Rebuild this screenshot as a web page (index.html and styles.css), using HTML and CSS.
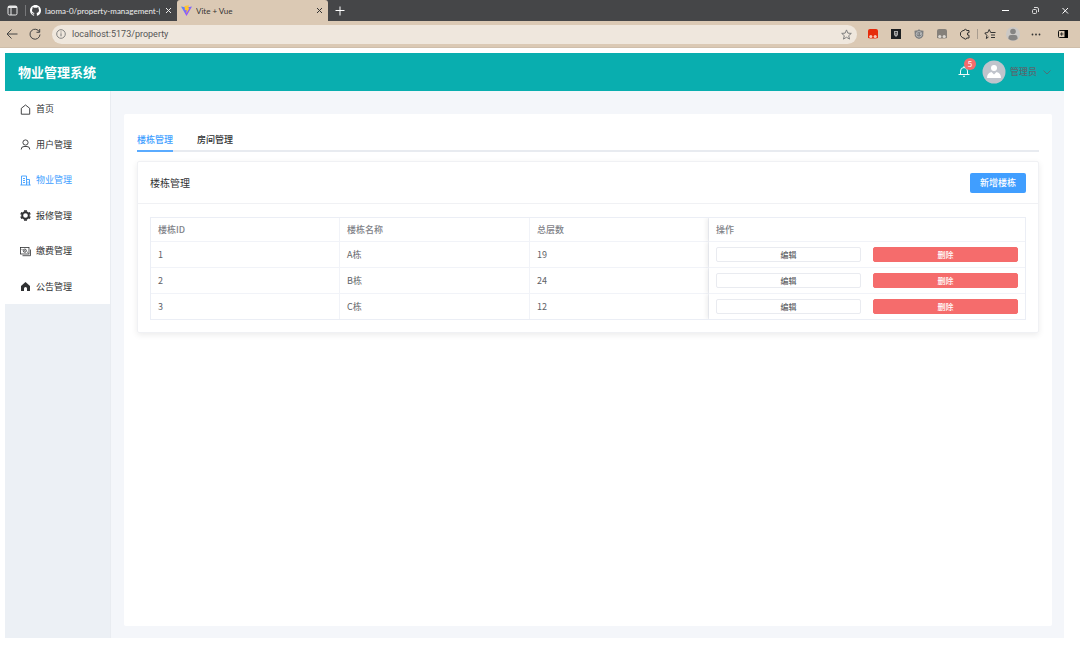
FILE: index.html
```html
<!DOCTYPE html>
<html lang="zh-CN">
<head>
<meta charset="utf-8">
<title>Vite + Vue</title>
<link rel="stylesheet" href="styles.css">
</head>
<body>
<div class="window">
  <div class="tabstrip">
    <button class="strip-btn tab-actions" aria-label="标签页操作"><svg width="11" height="11" viewBox="0 0 11 11" fill="none" stroke="#e8e8e8"><rect x="1" y="1" width="9" height="9" rx="1.5"/><path d="M1 2h9" stroke-width="2"/><path d="M4 2v8"/></svg></button>
    <span class="strip-sep"></span>
    <div class="btab">
      <svg width="11" height="11" viewBox="0 0 16 16" fill="#fff"><path d="M8 0C3.58 0 0 3.58 0 8c0 3.54 2.29 6.53 5.47 7.59.4.07.55-.17.55-.38 0-.19-.01-.82-.01-1.49-2.01.37-2.53-.49-2.69-.94-.09-.23-.48-.94-.82-1.13-.28-.15-.68-.52-.01-.53.63-.01 1.08.58 1.23.82.72 1.21 1.87.87 2.33.66.07-.52.28-.87.51-1.07-1.78-.2-3.64-.89-3.64-3.95 0-.87.31-1.59.82-2.15-.08-.2-.36-1.02.08-2.12 0 0 .67-.21 2.2.82.64-.18 1.32-.27 2-.27s1.36.09 2 .27c1.53-1.04 2.2-.82 2.2-.82.44 1.1.16 1.92.08 2.12.51.56.82 1.27.82 2.15 0 3.07-1.87 3.75-3.65 3.95.29.25.54.73.54 1.48 0 1.07-.01 1.93-.01 2.2 0 .21.15.46.55.38A8.01 8.01 0 0 0 16 8c0-4.42-3.58-8-8-8z"/></svg>
      <span class="btab-title">laoma-0/property-management-(</span>
      <button class="close" aria-label="关闭"><svg width="7" height="7" viewBox="0 0 7 7" stroke="currentColor"><path d="M1 1l5 5M6 1L1 6"/></svg></button>
    </div>
    <div class="btab btab-active">
      <svg width="11" height="11" viewBox="0 0 11 11"><defs><linearGradient id="v" x1="0" y1="0" x2="1" y2="1"><stop offset="0" stop-color="#4a8dff"/><stop offset="1" stop-color="#b73bfe"/></linearGradient></defs><path d="M0 1.5l5.500 9.500L11 1.500 5.500 2.500z" fill="url(#v)"/><path d="M3.500 1L8 .3 7.200 3l1.200.2-3.200 5.500.5-3.700-1.800.2z" fill="#ffc52e"/></svg>
      <span class="btab-title">Vite + Vue</span>
      <button class="close" aria-label="关闭"><svg width="7" height="7" viewBox="0 0 7 7" stroke="currentColor"><path d="M1 1l5 5M6 1L1 6"/></svg></button>
    </div>
    <button class="strip-btn new-tab" aria-label="新建标签页"><svg width="10" height="10" viewBox="0 0 10 10" stroke="#fff"><path d="M5 .5v9M.5 4.500h9"/></svg></button>
    <div class="win-controls">
      <button class="strip-btn" aria-label="最小化"><svg width="9" height="9" viewBox="0 0 9 9" stroke="#fff"><path d="M1 4.500h7"/></svg></button>
      <button class="strip-btn" aria-label="还原"><svg width="9" height="9" viewBox="0 0 9 9" fill="none" stroke="#ddd"><rect x="1.500" y="3.500" width="4" height="4" rx="1"/><path d="M3 1.500h3q1.500 0 1.500 1.500v3"/></svg></button>
      <button class="strip-btn" aria-label="关闭窗口"><svg width="9" height="9" viewBox="0 0 9 9" stroke="#fff"><path d="M1.500 2l5.500 5.500M7 2L1.500 7.500"/></svg></button>
    </div>
  </div>

  <div class="toolbar">
    <button class="tool" aria-label="后退"><svg width="12" height="12" viewBox="0 0 12 12" fill="none" stroke="#444"><path d="M11.500 6H1M5.500 1.500L1 6l4.500 4.500"/></svg></button>
    <button class="tool" aria-label="刷新"><svg width="12" height="12" viewBox="0 0 12 12" fill="none" stroke="#444"><path d="M10.500 4A5 5 0 1 0 11 6.500M10.700 1v3.300H7.500"/></svg></button>
    <div class="address">
      <svg width="10" height="10" viewBox="0 0 10 10" fill="none" stroke="#777"><circle cx="5" cy="5" r="4.300" stroke-width=".9"/><path d="M5 4.300v3M5 2.500v1"/></svg>
      <input class="url" aria-label="地址" value="localhost:5173/property">
      <svg width="11" height="11" viewBox="0 0 24 24" fill="none" stroke="#777" stroke-width="2"><path d="M12 2l3 7 7.500.6-5.700 5 1.800 7.400L12 18l-6.600 4 1.800-7.400-5.700-5L9 9z"/></svg>
    </div>
    <div class="extensions">
      <svg width="12" height="12" viewBox="0 0 12 12"><path d="M1 3q0-2 2-2h6q2 0 2 2v7q-5 1-10 0z" fill="#e62a0a"/><circle cx="3.800" cy="8.500" r="1.600" fill="#f9c9b8"/><circle cx="8.200" cy="8.500" r="1.600" fill="#f9c9b8"/></svg>
      <svg width="12" height="12" viewBox="0 0 12 12"><path d="M1 1h10v10H1z" fill="#1c1f22"/><path d="M4 3h4v4L6 9 4 7z" fill="#aaa"/><path d="M5 4.500h2M6 4v3" stroke="#333" stroke-width=".7"/></svg>
      <svg width="12" height="12" viewBox="0 0 12 12"><path d="M6 1l1 1.200 3.500.5-.3 5.300Q9 10.500 6 11 3 10.500 1.800 8l-.3-5.300L5 2.200z" fill="#7c7e80"/><circle cx="6" cy="6.300" r="2.800" fill="none" stroke="#c5c5c5" stroke-width=".8"/><path d="M4.500 6h1M7 6h1" stroke="#eee"/></svg>
      <svg width="12" height="12" viewBox="0 0 12 12"><path d="M1 3q0-2 2-2h6q2 0 2 2v7q-5 1-10 0z" fill="#85807a"/><circle cx="3.800" cy="8.500" r="1.600" fill="#ddd8d2"/><circle cx="8.200" cy="8.500" r="1.600" fill="#ddd8d2"/></svg>
      <svg width="12" height="12" viewBox="0 0 12 12" fill="none" stroke="#333"><path d="M4 2.500h1.200a1.200 1.200 0 0 1 2.400 0H10v2.200a1.300 1.300 0 1 0 0 2.500V10H7.600a1.200 1.200 0 0 1-2.400 0H3.800L1.500 7.500v-3z"/></svg>
      <span class="tool-sep"></span>
      <svg width="12" height="12" viewBox="0 0 12 12" fill="none" stroke="#333"><path d="M4.500 9L2.300 10.500l.6-3L.8 5l3-.5L5.200 1.500l1.500 3H11.500M7 7h4M7 9.500h4"/></svg>
      <svg class="profile" width="14" height="14" viewBox="0 0 14 14"><circle cx="7" cy="7" r="7" fill="#cbc8c5"/><circle cx="7" cy="4.500" r="2.800" fill="#858483"/><path d="M2.500 12q-.5-4 2.500-4h4q3 0 2.500 4Q7 15 2.500 12z" fill="#858483"/></svg>
      <svg width="12" height="12" viewBox="0 0 12 12" fill="#333"><circle cx="2.500" cy="6.500" r=".9"/><circle cx="6" cy="6.500" r=".9"/><circle cx="9.500" cy="6.500" r=".9"/></svg>
      <svg class="sidebar-toggle" width="12" height="12" viewBox="0 0 12 12"><rect x="1.500" y="2.500" width="9" height="7" rx="1" fill="none" stroke="#111"/><path d="M7.500 2h3.500v8H7.500z"/><path d="M3 6h3.500M4.700 4.300v3.500" stroke="#111" stroke-width=".8"/></svg>
    </div>
  </div>

  <div class="app">
    <header class="header">
      <h1 class="brand">物业管理系统</h1>
      <div class="user">
        <button class="bell" aria-label="通知"><svg width="12" height="12" viewBox="0 0 12 12" fill="none" stroke="#eefafa"><path d="M.5 9.500h11M2.500 9.500V6a3.500 3.500 0 0 1 7 0v3.500M6 1v1.500M5 11.300h2"/></svg><span class="badge">5</span></button>
        <svg class="avatar" width="24" height="24" viewBox="0 0 24 24"><circle cx="12" cy="12" r="11.500" fill="#c0c4cc"/><circle cx="12" cy="8" r="3" fill="#fff"/><path d="M5 18q0-5 4.500-6l2.500 2.500 2.500-2.500q4.500 1 4.500 6z" fill="#fff"/></svg>
        <button class="user-menu">管理员<svg width="8" height="8" viewBox="0 0 8 8" fill="none" stroke="#56696f" stroke-width=".9"><path d="M.5 2.500L4 6l3.500-3.500"/></svg></button>
      </div>
    </header>
    <div class="body">
      <nav class="side">
        <div class="menu">
          <a class="item" href="#"><svg width="11" height="11" viewBox="0 0 11 11" fill="none" stroke="#303133" stroke-width=".9"><path d="M1.300 10.200V4.300L5.500 1l4.200 3.300v5.900z"/></svg>首页</a>
          <a class="item" href="#"><svg width="11" height="11" viewBox="0 0 11 11" fill="none" stroke="#303133" stroke-width=".9"><circle cx="5.500" cy="3.500" r="2.600"/><path d="M1.200 10.500Q1.200 7.500 4 7.500h3q2.800 0 2.800 3"/></svg>用户管理</a>
          <a class="item item-active" href="#" aria-current="page"><svg width="11" height="11" viewBox="0 0 11 11" fill="none" stroke="#409eff" stroke-width=".9"><path d="M.3 10h10.400M1.500 10V1h5v9M6.500 4.500h3V10M3 3.500h2M3 5.500h2M3 7.500h2M8 6.500v2"/></svg>物业管理</a>
          <a class="item" href="#"><svg width="11" height="11" viewBox="0 0 11 11" fill="none" stroke="#303133"><circle cx="5.500" cy="5.500" r="3.300" stroke-width="1.900"/><path d="M4 1h3M4 10h3M.9 4.500L2 2.200M10.100 4.500L9 2.200M.9 6.500L2 8.800M10.100 6.500L9 8.800" stroke-width="1.500"/></svg>报修管理</a>
          <a class="item" href="#"><svg width="11" height="11" viewBox="0 0 11 11" fill="none" stroke="#303133" stroke-width=".8"><rect x=".5" y="1.500" width="8.500" height="6.500"/><circle cx="4.800" cy="4.700" r="1.600"/><path d="M2 3v.8M7.500 5.800v.8M2.500 9.700h8V3.500M4.800 4v1.400"/></svg>缴费管理</a>
          <a class="item" href="#"><svg width="11" height="11" viewBox="0 0 11 11" fill="#303133"><path d="M1 10V5l4.500-4L10 5v5H7V7.500a1.500 1.500 0 0 0-3 0V10z"/></svg>公告管理</a>
        </div>
      </nav>
      <main class="main">
        <section class="panel">
          <div class="tabs" role="tablist">
            <button class="tab tab-active" role="tab" aria-selected="true">楼栋管理</button>
            <button class="tab" role="tab" aria-selected="false">房间管理</button>
          </div>
          <div class="card">
            <div class="card-head"><h2 class="card-title">楼栋管理</h2><button class="btn-primary">新增楼栋</button></div>
            <div class="card-body">
              <table class="table">
                <colgroup><col class="c-id"><col class="c-name"><col class="c-floor"><col class="c-act"></colgroup>
                <thead><tr><th>楼栋ID</th><th>楼栋名称</th><th>总层数</th><th class="act">操作</th></tr></thead>
                <tbody>
                  <tr><td>1</td><td>A栋</td><td>19</td><td class="act"><div class="actions"><button class="btn">编辑</button><button class="btn btn-danger">删除</button></div></td></tr>
                  <tr><td>2</td><td>B栋</td><td>24</td><td class="act"><div class="actions"><button class="btn">编辑</button><button class="btn btn-danger">删除</button></div></td></tr>
                  <tr><td>3</td><td>C栋</td><td>12</td><td class="act"><div class="actions"><button class="btn">编辑</button><button class="btn btn-danger">删除</button></div></td></tr>
                </tbody>
              </table>
            </div>
          </div>
        </section>
      </main>
    </div>
  </div>
</div>
</body>
</html>
```
FILE: styles.css
```css
* { box-sizing: border-box; }
body {
  margin: 0;
  background: #fff;
  color: #303133;
  font: 9px/12px "Noto Sans CJK SC", "Noto Sans", sans-serif;
}
button, input { font: inherit; color: inherit; border: 0; padding: 0; background: none; }
svg { display: block; flex: none; }
.window { min-height: 100vh; display: flex; flex-direction: column; }

.tabstrip { display: flex; align-items: stretch; height: 21px; background: #454648; color: #eee; font: 8px/12px Lato, sans-serif; }
.strip-btn { display: grid; place-items: center; width: 30px; }
.tab-actions { width: 25px; }
.strip-sep { width: 1px; margin: 5px 0; background: #77787a; }
.btab { display: flex; align-items: center; gap: 4px; width: 151px; padding: 0 5px 0 4px; }
.btab-title { flex: 1; overflow: hidden; white-space: nowrap; }
.btab-active { background: #dbc9b4; color: #333; border-radius: 3px 3px 0 0; }
.close { display: grid; place-items: center; width: 8px; }
.new-tab { width: 23px; }
.win-controls { display: flex; margin-left: auto; }

.toolbar { display: flex; align-items: center; height: 27px; padding: 0 11px 0 6px; gap: 11px; background: #dbc9b4; border-bottom: 1px solid #cfbeaa; }
.tool { display: grid; place-items: center; }
.address { flex: 1; display: flex; align-items: center; gap: 6px; height: 19px; margin-right: -1px; padding: 0 5px 0 4px; border-radius: 10px; background: #efe7dd; }
.url { flex: 1; min-width: 0; outline: 0; color: #555; font: 9px/12px Roboto, sans-serif; }
.extensions { display: flex; align-items: center; gap: 11px; }
.tool-sep { width: 1px; height: 10px; margin: 0 -5px; background: #a99d90; }
.profile { margin: 0 -1px; }
.sidebar-toggle { margin-left: 4px; }

.app { flex: 1; display: flex; flex-direction: column; margin: 5px 16px 7px 5px; }
.header { display: flex; justify-content: space-between; align-items: center; height: 38px; padding: 0 13px; background: #09aeaf; }
.brand { margin: 0; color: #fff; font-size: 13px; line-height: 18px; }
.user { display: flex; align-items: center; }
.bell { position: relative; padding-bottom: 2px; }
.badge { position: absolute; left: 6px; top: -7px; width: 12px; height: 12px; border-radius: 6px; background: #f56c6c; color: #fff; font-size: 8px; line-height: 12px; text-align: center; }
.avatar { margin-left: 12px; }
.user-menu { display: flex; align-items: center; gap: 6px; margin-left: 4px; color: #56696f; font-weight: 500; }

.body { flex: 1; display: flex; }
.side { width: 106px; background: #ecf0f5; border-right: 1px solid #e9ecf1; }
.menu { display: grid; grid-auto-rows: 1fr; height: 213px; background: #fff; }
.item { display: flex; align-items: center; gap: 5px; padding: 1px 0 0 15px; color: #303133; text-decoration: none; }
.item-active { color: #409eff; }
.main { flex: 1; display: flex; padding: 23px 12px 12px 13px; background: #f4f6fa; }
.panel { flex: 1; padding: 13px; background: #fff; border-radius: 2px; }

.tabs { display: flex; gap: 24px; border-bottom: 2px solid #e8ebf0; }
.tab { height: 25px; margin-bottom: -2px; padding-top: 2px; border-bottom: 2px solid transparent; font-weight: 500; }
.tab-active { color: #409eff; border-color: #5aabff; }
.card { margin-top: 9px; border: 1px solid #f0f1f4; border-radius: 2px; box-shadow: 0 2px 6px rgba(0, 0, 0, .08); }
.card-head { display: flex; justify-content: space-between; align-items: center; height: 42px; padding: 0 12px; border-bottom: 1px solid #f0f1f4; }
.card-title { margin: 0; font-size: 10px; font-weight: 400; }
.btn-primary { height: 20px; padding: 0 10px; border-radius: 2px; background: #409eff; color: #fff; font-weight: 500; }
.card-body { padding: 13px 12px 12px; }

.table { width: 100%; table-layout: fixed; border-collapse: separate; border-spacing: 0; border: 1px solid #ebeef5; color: #606266; }
.c-id { width: 189px; }
.c-name { width: 190px; }
.c-floor { width: 179px; }
.table th, .table td { height: 26px; padding: 0 7px; text-align: left; border-bottom: 1px solid #f1f3f8; border-right: 1px solid #f1f3f8; }
.table th { height: 24px; color: #7e8187; font-weight: 500; }
.table .act { border-right: 0; box-shadow: -3px 0 4px rgba(0, 0, 0, .06); clip-path: inset(0 0 0 -8px); }
.table tr:last-child td { height: 25px; border-bottom: 0; }
.actions { display: flex; gap: 12px; }
.btn { flex: 1; height: 15px; border: 1px solid #e9ebf0; border-radius: 2px; background: #fff; font-size: 8px; line-height: 12px; font-weight: 500; }
.btn-danger { border-color: #f56c6c; background: #f56c6c; color: #fff; }
```
